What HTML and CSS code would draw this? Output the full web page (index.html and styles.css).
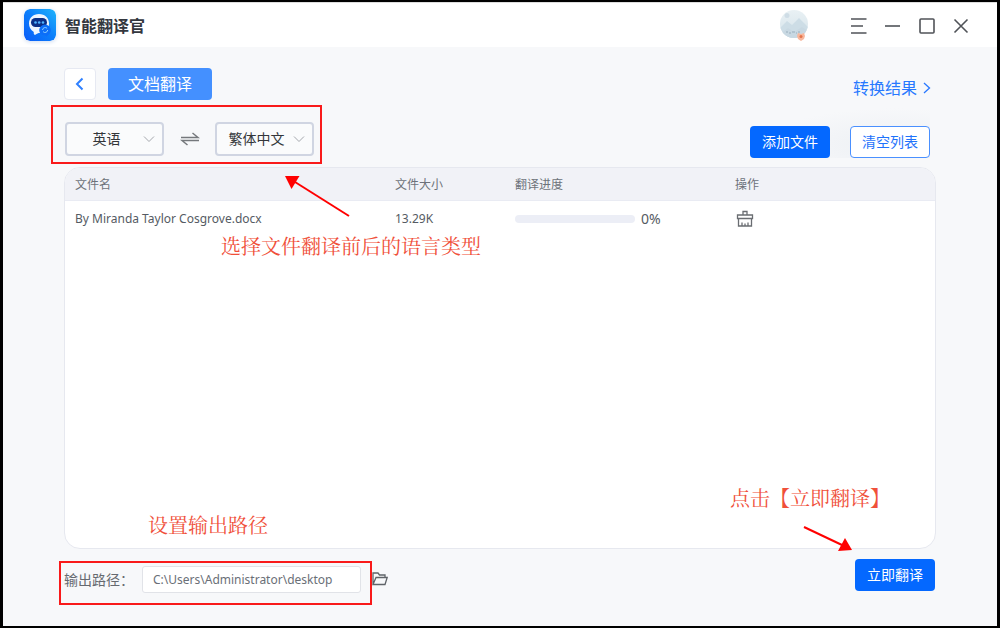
FILE: index.html
```html
<!DOCTYPE html>
<html lang="zh-CN">
<head>
<meta charset="utf-8">
<meta name="viewport" content="width=device-width, initial-scale=1">
<title>智能翻译官</title>
<link rel="stylesheet" href="styles.css">
</head>
<body class="window">
  <header class="titlebar">
    <svg class="logo" viewBox="0 0 32 32" aria-hidden="true">
      <defs>
        <linearGradient id="lg" x1="0" y1="1" x2="1" y2="0"><stop offset="0" stop-color="#0a5cf8"/><stop offset=".5" stop-color="#0b7dfb"/><stop offset="1" stop-color="#1fb4fb"/></linearGradient>
      </defs>
      <rect width="32" height="32" rx="6" fill="url(#lg)"/>
      <path d="M15 5c6 0 10 4 10 9.500s-4 9.500-9 9.500c-2 0-3 .6-4.500 1.800C10 26 9.500 25 9.800 23 6.500 21 5 18 5 14.500 5 9 9 5 15 5z" fill="#eef5ff"/>
      <rect x="7" y="9" width="16" height="9" rx="4.500" fill="#0b2f86"/>
      <g fill="#4fb4ff"><circle cx="11.500" cy="13.500" r="1.300"/><circle cx="15.200" cy="13.500" r="1.300"/><circle cx="19" cy="13.500" r="1.300"/></g>
      <path d="M21 15.500a5.800 5.800 0 0 1 5.800 5.800c0 2.500-1.700 4-4.300 6.200-.8-.8-1.500-1.200-2.500-1.200a5.400 5.400 0 0 1-4.800-5.200A5.800 5.800 0 0 1 21 15.500z" fill="#0c6ef8"/>
      <path d="M18.500 21a2.700 2.700 0 0 1 4.600-1.700M23.700 21a2.700 2.700 0 0 1-4.600 1.700" fill="none" stroke="#8ed0ff" stroke-width="1"/>
    </svg>
    <h1 class="app-name">智能翻译官</h1>
    <div class="avatar">
      <svg viewBox="0 0 30 32" aria-hidden="true">
        <defs><clipPath id="av"><circle cx="14" cy="14" r="14"/></clipPath>
        <linearGradient id="sky" x1="0" y1="0" x2="0" y2="1"><stop offset="0" stop-color="#e9f1f4"/><stop offset="1" stop-color="#d5e2ea"/></linearGradient></defs>
        <g clip-path="url(#av)">
          <rect width="28" height="28" fill="url(#sky)"/>
          <circle cx="7" cy="5.500" r="2.500" fill="#cfdde6"/>
          <path d="M0 18l7-7 5 4 7-7 9 9v11H0z" fill="#cddde6"/>
          <path d="M0 24l8-6 6 4 8-5 6 4v7H0z" fill="#c8d8e2"/>
          <path d="M6 22h2M9 23h2M12 22h3M16 23h1M18 22h2" stroke="#a9bcc9" stroke-width="1.500"/>
        </g>
        <path d="M18 23l3 1 3-1 1 3-1 3-3 2-3-2-1-3z" fill="#f7b79d"/><circle cx="21" cy="26.500" r="1.500" fill="#e4744c"/>
      </svg>
    </div>
    <nav class="window-controls" aria-label="窗口">
      <button aria-label="菜单"><svg viewBox="0 0 16 16"><path d="M0 1h15.500M0 8h12M0 15h15.500"/></svg></button>
      <button aria-label="最小化"><svg viewBox="0 0 16 16"><path d="M0 8h15"/></svg></button>
      <button aria-label="最大化"><svg viewBox="0 0 16 16"><rect x="1" y="1" width="14" height="14" rx="1"/></svg></button>
      <button aria-label="关闭"><svg viewBox="0 0 16 16"><path d="M1.500 1.500l13 13M14.500 1.500l-13 13"/></svg></button>
    </nav>
  </header>

  <main class="content">
    <div class="crumbs">
      <button class="back" aria-label="返回"><svg viewBox="0 0 14 14"><path d="M9.500 1.500L4 7l5.500 5.500"/></svg></button>
      <button class="tab">文档翻译</button>
      <a class="results" href="#results">转换结果<svg viewBox="0 0 10 12" aria-hidden="true"><path d="M2 1l5.500 5L2 11"/></svg></a>
    </div>

    <div class="toolbar">
      <div class="languages">
        <div class="picker">
          <select aria-label="源语言"><option>英语</option></select>
          <svg viewBox="0 0 12 8" aria-hidden="true"><path d="M1 1.500l5 5 5-5"/></svg>
        </div>
        <button class="swap" aria-label="交换语言"><svg viewBox="0 0 20 14"><path d="M1 5.500h17L12.500 1M19 8.500H2L7.500 13"/></svg></button>
        <div class="picker">
          <select aria-label="目标语言"><option>繁体中文</option></select>
          <svg viewBox="0 0 12 8" aria-hidden="true"><path d="M1 1.500l5 5 5-5"/></svg>
        </div>
        <svg class="pointer pointer-languages" viewBox="0 0 66 42" aria-hidden="true"><path d="M64 40L10 6" stroke="red" stroke-width="2"/><path d="M0 0h14.500L6.500 13z" fill="red"/></svg>
      </div>
      <div class="actions">
        <button class="btn primary">添加文件</button>
        <button class="btn outline">清空列表</button>
      </div>
    </div>

    <section class="panel">
      <table class="files">
        <colgroup><col class="col-name"><col class="col-size"><col class="col-progress"><col></colgroup>
        <thead><tr><th>文件名</th><th>文件大小</th><th>翻译进度</th><th>操作</th></tr></thead>
        <tbody>
          <tr>
            <td>By Miranda Taylor Cosgrove.docx</td>
            <td>13.29K</td>
            <td><div class="progress"><span class="bar"></span><span class="percent">0%</span></div></td>
            <td><button class="clear" aria-label="删除"><svg viewBox="0 0 18 18"><path d="M7 5V1.500h4V5M1.500 5h15v3.500h-15zM2.500 8.500v7.500h13V8.500M6 12.500V16M9 13.500V16M12 12.500V16"/></svg></button></td>
          </tr>
        </tbody>
      </table>
      <p class="note note-languages">选择文件翻译前后的语言类型</p>
      <p class="note note-path">设置输出路径</p>
      <p class="note note-start">点击【立即翻译】</p>
    </section>

    <footer class="output">
      <div class="path">
        <label for="path">输出路径：</label>
        <input id="path" type="text" value="C:\Users\Administrator\desktop">
      </div>
      <button class="browse" aria-label="选择文件夹"><svg viewBox="0 0 16 14"><path d="M1 12.500V1h5l1.500 2H13v2.500M1 12.500L4 5.500h11.200L13 12.500z"/></svg></button>
      <div class="start">
        <button class="btn primary">立即翻译</button>
        <svg class="pointer pointer-start" viewBox="0 0 50 28" aria-hidden="true"><path d="M1 2l38 18" stroke="red" stroke-width="2"/><path d="M42 13l7 12-14 1z" fill="red"/></svg>
      </div>
    </footer>
  </main>
</body>
</html>
```

FILE: styles.css
```css
* { box-sizing: border-box; }

.window {
  display: flex;
  flex-direction: column;
  min-height: 100vh;
  margin: 0;
  border: solid #000;
  border-width: 2px 3px;
  background: #f7f8fa;
  color: #555b63;
  font: 13px/20px "Noto Sans", "Noto Sans CJK SC", sans-serif;
}

button, select, input { font: inherit; color: inherit; margin: 0; }
button { padding: 0; border: 0; background: none; cursor: pointer; }
svg { display: block; fill: none; }

/* Title bar */
.titlebar {
  display: flex;
  align-items: center;
  height: 45px;
  padding: 0 28px 0 21px;
  border-top: 1px solid #ddd;
  background: #fff;
}
.logo { width: 32px; height: 32px; border-radius: 6px; box-shadow: 0 1px 4px #cfdcf0; }
.app-name { margin: 0 auto 0 9px; font: bold 16px/24px "Noto Sans CJK SC", sans-serif; color: #33373e; }
.avatar { width: 30px; height: 32px; margin: 2px 41px 0 0; }
.window-controls { display: flex; gap: 18px; margin-top: 2px; }
.window-controls svg { width: 16px; height: 16px; stroke: #505358; stroke-width: 1.6; }

/* Content */
.content { flex: 1; display: flex; flex-direction: column; padding: 21px 61px 21px; }

.crumbs { display: flex; align-items: center; gap: 12px; height: 32px; }
.back {
  display: grid;
  place-items: center;
  width: 32px;
  height: 32px;
  border: 1px solid #e6e9f2;
  border-radius: 4px;
  background: #fff;
}
.back svg { width: 14px; height: 14px; stroke: #2f80ff; stroke-width: 2; }
.tab { width: 104px; height: 32px; border-radius: 4px; background: #4490ff; color: #fff; font-size: 16px; }
.results {
  display: flex;
  align-items: center;
  gap: 5px;
  margin: 8px 4px 0 auto;
  color: #2878ff;
  font-size: 16px;
  text-decoration: none;
}
.results svg { width: 10px; height: 12px; stroke: currentColor; stroke-width: 1.3; }

.toolbar { display: flex; align-items: flex-start; justify-content: space-between; margin: 5px 6px 3px -13px; }
.languages {
  position: relative;
  z-index: 1;
  display: flex;
  align-items: center;
  padding: 8px 6px 0 12px;
  height: 59px;
  border: 2px solid #f91a1a;
}
.picker { display: grid; align-items: center; width: 99px; }
.picker select, .picker svg { grid-area: 1 / 1; }
.picker select {
  width: 100%;
  height: 34px;
  padding: 0 16px 0 0;
  appearance: none;
  border: 2px solid #d0d5e2;
  border-radius: 4px;
  background: #fafbfc;
  color: #33363a;
  font-size: 14px;
  text-align: center;
  text-align-last: center;
}
.picker svg { justify-self: end; width: 12px; height: 8px; margin-right: 9px; stroke: #a4a7ad; pointer-events: none; }
.swap { margin: 0 15px 0 16px; }
.swap svg { width: 20px; height: 14px; stroke: #75787c; stroke-width: 1.5; }

.actions {
  display: flex;
  gap: 20px;
  align-items: flex-end;
  height: 53px;
  background: radial-gradient(ellipse at 80% 75%, #edf0f4, #f7f8fa 65%);
}
.btn { width: 80px; height: 32px; border-radius: 4px; font-size: 14px; }
.primary { background: #0468ff; color: #fff; }
.outline { border: 1px solid #4a90ff; background: #fff; color: #1f73fb; }

/* File list */
.panel {
  position: relative;
  flex: 1;
  overflow: hidden;
  min-height: 200px;
  border: 1px solid #e6e8ef;
  border-radius: 16px;
  background: #fff;
}
.files { width: 100%; table-layout: fixed; border-collapse: collapse; }
.col-name { width: 330px; }
.col-size { width: 120px; }
.col-progress { width: 220px; }
.files th { height: 32px; padding: 2px 0 0; border-bottom: 1px solid #e9ebf3; background: #f1f2f7; color: #6d727a; font-size: 12px; font-weight: normal; text-align: left; }
.files td { height: 36px; padding: 1px 0 0; font-size: 12px; }
.files th:first-child, .files td:first-child { padding-left: 10px; }
.progress { display: flex; align-items: center; gap: 6px; }
.bar { width: 120px; height: 8px; border-radius: 4px; background: #eceef6; }
.percent { font-size: 14px; }
.clear { display: block; }
.clear svg { width: 20px; height: 18px; stroke: #6a6d72; stroke-width: 1.3; }

/* Output path */
.output { display: flex; align-items: flex-start; margin: 10px 1px 0 -5px; }
.path {
  display: flex;
  align-items: flex-start;
  height: 44px;
  margin-top: 2px;
  padding: 3px 9px 0 3px;
  border: 2px solid #f91a1a;
}
.path label { width: 78px; padding-top: 4px; color: #666a70; font-size: 14px; white-space: nowrap; }
.path input {
  width: 219px;
  height: 27px;
  padding: 0 10px;
  border: 1px solid #e1e3e8;
  border-radius: 3px;
  background: #fff;
  color: #6a6f77;
  font-size: 12px;
}
.browse { margin: 13px auto 0 0; }
.browse svg { width: 16px; height: 14px; stroke: #5f6368; stroke-width: 1.3; }
.start { position: relative; }

/* Guide notes laid over the window */
.note { position: absolute; margin: 0; color: #f0503a; font: 20px/28px "Noto Serif CJK SC", "Source Han Serif SC", "AR PL UMing CN", "Noto Sans CJK SC", serif; }
.note-languages { left: 156px; top: 64px; }
.note-path { left: 83px; bottom: 9px; }
.note-start { right: 45px; bottom: 36px; }
.pointer { position: absolute; pointer-events: none; }
.pointer-languages { left: 232px; top: 69px; width: 66px; height: 42px; }
.pointer-start { right: 82px; top: -34px; width: 50px; height: 28px; }
```
